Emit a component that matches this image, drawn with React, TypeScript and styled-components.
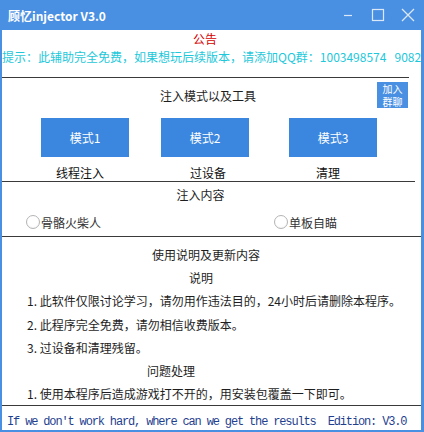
import styled, { createGlobalStyle } from 'styled-components'

const GlobalStyle = createGlobalStyle`
  html, body {
    margin: 0;
    padding: 0;
    background: #ffffff;
  }
  body {
    font-family: "Noto Sans CJK SC", "Microsoft YaHei", sans-serif;
    font-size: 12px;
    color: #1e1e1e;
  }
`

const Window = styled.div`
  width: 424px;
  height: 432px;
  box-sizing: border-box;
  display: flex;
  flex-direction: column;
  padding: 0 3px 2px 2px;
  background: #4a90e2;
  overflow: hidden;
`

const TitleBar = styled.div`
  height: 30px;
  flex: none;
  display: flex;
  align-items: center;
  padding-left: 6px;
`

const TitleText = styled.span`
  font-weight: bold;
  font-size: 12px;
  color: #ffffff;
`

const Controls = styled.div`
  margin-left: auto;
  margin-right: 6px;
  display: flex;
  align-items: center;
  gap: 16px;
`

const Body = styled.div`
  flex: 1;
  display: flex;
  flex-direction: column;
  background: #ffffff;
  overflow: hidden;
`

const NoticeTitle = styled.div`
  line-height: 17px;
  padding-right: 13px;
  text-align: center;
  color: #d40000;
`

const Marquee = styled.div`
  line-height: 20px;
  white-space: pre;
  color: #1ec8da;
`

const Rule = styled.div<{ $right?: number; $top?: number }>`
  flex: none;
  height: 1px;
  background: #3a3a3a;
  margin-right: ${p => p.$right ?? 0}px;
  margin-top: ${p => p.$top ?? 0}px;
`

const ModeHeader = styled.div`
  height: 34px;
  display: grid;
  grid-template-columns: 1fr auto 1fr;
  align-items: center;
  padding-right: 7px;
`

const SectionTitle = styled.div`
  grid-column: 2;
`

const JoinButton = styled.button`
  grid-column: 3;
  justify-self: end;
  display: flex;
  flex-direction: column;
  align-items: center;
  justify-content: center;
  width: 31px;
  height: 26px;
  margin-right: 6px;
  padding: 0;
  border: none;
  background: #4a90e2;
  color: #ffffff;
  font-family: inherit;
  font-size: 10px;
  line-height: 13px;
`

const ModeRow = styled.div`
  display: flex;
  margin-top: 6px;
  padding-left: 39px;
`

const ModeItem = styled.div<{ $gap: number }>`
  display: flex;
  flex-direction: column;
  margin-left: ${p => p.$gap}px;
`

const ModeButton = styled.button`
  width: 88px;
  height: 39px;
  border: none;
  padding: 0;
  background: #3b87e0;
  color: #ffffff;
  font-family: inherit;
  font-size: 12px;
`

const ModeLabel = styled.div<{ $offset: number }>`
  margin-top: 8px;
  line-height: 16px;
  text-align: center;
  color: #111;
  padding-left: ${p => (p.$offset > 0 ? p.$offset * 2 : 0)}px;
  padding-right: ${p => (p.$offset < 0 ? -p.$offset * 2 : 0)}px;
`

const ContentTitle = styled.div`
  line-height: 26px;
  padding-right: 22px;
  text-align: center;
`

const RadioRow = styled.div`
  height: 28px;
  display: grid;
  grid-template-columns: 248px auto;
  align-items: center;
  padding-left: 24px;
`

const RadioOption = styled.label`
  display: flex;
  align-items: center;
  gap: 1px;
  color: #333333;
`

const RadioCircle = styled.span`
  width: 12px;
  height: 12px;
  border: 1px solid #b4b4b4;
  border-radius: 50%;
  background: radial-gradient(circle at 50% 40%, #ffffff 55%, #ececec 100%);
`

const Notes = styled.div`
  flex: none;
  padding-top: 6px;
`

const NoteLine = styled.div<{ $indent: number }>`
  line-height: 23.2px;
  padding-left: ${p => p.$indent}px;
  white-space: nowrap;
`

const Footer = styled.div`
  flex: 1;
  display: flex;
  align-items: flex-end;
  padding: 0 0 1px 5px;
  font-family: "Liberation Mono", "DejaVu Sans Mono", monospace;
  font-size: 12px;
  letter-spacing: -1.15px;
  line-height: 14px;
  white-space: pre;
  color: #1f3f8f;
`

const MinimizeIcon = () => (
  <svg width="14" height="14" viewBox="0 0 14 14">
    <line x1="3" y1="7.5" x2="11" y2="7.5" stroke="#dbe8f8" strokeWidth="1.2" />
  </svg>
)

const MaximizeIcon = () => (
  <svg width="14" height="14" viewBox="0 0 14 14">
    <rect x="1.5" y="1.5" width="11" height="11" fill="none" stroke="#dbe8f8" strokeWidth="1.2" />
  </svg>
)

const CloseIcon = () => (
  <svg width="14" height="14" viewBox="0 0 14 14">
    <path d="M1 1 L13 13 M13 1 L1 13" stroke="#dbe8f8" strokeWidth="1.3" />
  </svg>
)

const modes = [
  { name: '模式1', label: '线程注入', gap: 0, offset: -5 },
  { name: '模式2', label: '过设备', gap: 32, offset: 3 },
  { name: '模式3', label: '清理', gap: 40, offset: -5 },
]

const notes = [
  { text: '使用说明及更新内容', indent: 150 },
  { text: '说明', indent: 187 },
  { text: '1. 此软件仅限讨论学习，请勿用作违法目的，24小时后请删除本程序。', indent: 25 },
  { text: '2. 此程序完全免费，请勿相信收费版本。', indent: 25 },
  { text: '3. 过设备和清理残留。', indent: 25 },
  { text: '问题处理', indent: 145 },
  { text: '1. 使用本程序后造成游戏打不开的，用安装包覆盖一下即可。', indent: 25 },
]

const App = () => {
  return (
    <>
      <GlobalStyle />
      <Window>
        <TitleBar>
          <TitleText>顾忆injector V3.0</TitleText>
          <Controls>
            <MinimizeIcon />
            <MaximizeIcon />
            <CloseIcon />
          </Controls>
        </TitleBar>
        <Body>
          <NoticeTitle>公告</NoticeTitle>
          <Marquee>提示：此辅助完全免费，如果想玩后续版本，请添加QQ群：1003498574   908226412</Marquee>
          <Rule $top={10} $right={12} />

          <ModeHeader>
            <SectionTitle>注入模式以及工具</SectionTitle>
            <JoinButton>
              <span>加入</span>
              <span>群聊</span>
            </JoinButton>
          </ModeHeader>
          <ModeRow>
            {modes.map(m => (
              <ModeItem key={m.name} $gap={m.gap}>
                <ModeButton>{m.name}</ModeButton>
                <ModeLabel $offset={m.offset}>{m.label}</ModeLabel>
              </ModeItem>
            ))}
          </ModeRow>
          <Rule $right={6} />

          <ContentTitle>注入内容</ContentTitle>
          <RadioRow>
            <RadioOption><RadioCircle />骨骼火柴人</RadioOption>
            <RadioOption><RadioCircle />单板自瞄</RadioOption>
          </RadioRow>
          <Rule />

          <Notes>
            {notes.map(n => (
              <NoteLine key={n.text} $indent={n.indent}>{n.text}</NoteLine>
            ))}
          </Notes>
          <Rule />

          <Footer>If we don't work hard, where can we get the results  Edition: V3.0</Footer>
        </Body>
      </Window>
    </>
  )
}

export default App
